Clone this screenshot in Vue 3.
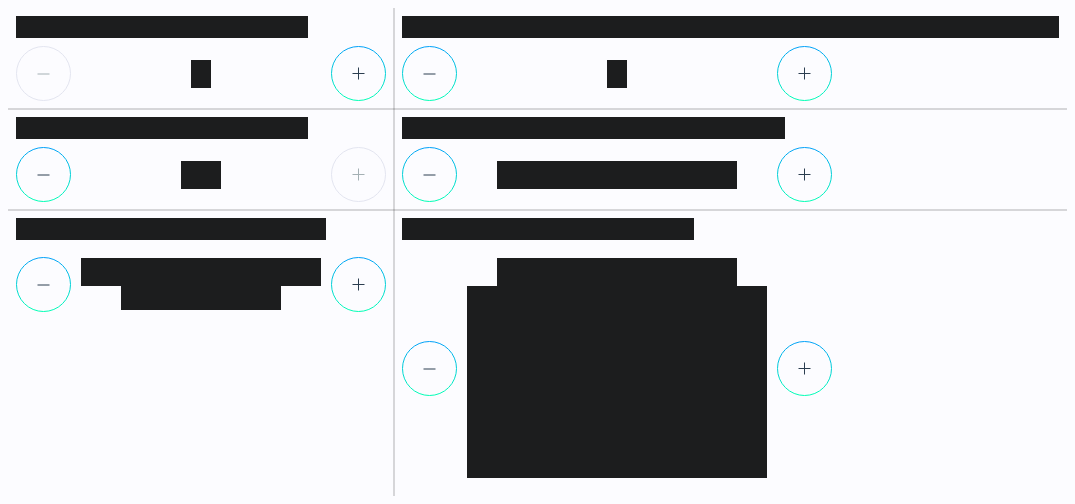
<script setup>
import { reactive } from 'vue'

const steppers = reactive([
  { id: 'a', title: 'medium', value: 'digit', extra: '', atMin: true },
  { id: 'b', title: 'full', value: 'digit', extra: '', wide: true },
  { id: 'c', title: 'medium', value: 'number', extra: '', atMax: true },
  { id: 'd', title: 'long', value: 'text', extra: '', wide: true },
  { id: 'e', title: 'regular', value: 'text', extra: 'short' },
  { id: 'f', title: 'medium', value: 'text', extra: 'paragraph', wide: true }
])
</script>

<template>
  <main class="board">
    <section v-for="s in steppers" :key="s.id" class="cell">
      <div class="title" :class="s.title"></div>
      <div class="stepper" :class="{ wide: s.wide }" role="group">
        <button type="button" class="step" aria-label="Decrease" :disabled="s.atMin">
          <svg viewBox="0 0 55 55" aria-hidden="true">
            <defs>
              <linearGradient :id="'ring-minus-' + s.id" x1="0" y1="0" x2="0" y2="1">
                <stop offset="0" stop-color="#00a0f8" />
                <stop offset="1" stop-color="#00ffb4" />
              </linearGradient>
            </defs>
            <circle cx="27.5" cy="27.5" r="27" :stroke="s.atMin ? '#e3e5f0' : `url(#ring-minus-${s.id})`" />
            <path class="sign" d="M21.5 28h12" />
          </svg>
        </button>
        <div class="value">
          <div class="amount" :class="s.value"></div>
          <div v-if="s.extra" class="extra" :class="s.extra"></div>
        </div>
        <button type="button" class="step" aria-label="Increase" :disabled="s.atMax">
          <svg viewBox="0 0 55 55" aria-hidden="true">
            <defs>
              <linearGradient :id="'ring-plus-' + s.id" x1="0" y1="0" x2="0" y2="1">
                <stop offset="0" stop-color="#00a0f8" />
                <stop offset="1" stop-color="#00ffb4" />
              </linearGradient>
            </defs>
            <circle cx="27.5" cy="27.5" r="27" :stroke="s.atMax ? '#e3e5f0' : `url(#ring-plus-${s.id})`" />
            <path class="sign" d="M21.5 27.5h12M27.5 21.5v12" />
          </svg>
        </button>
      </div>
    </section>
  </main>
</template>

<style>
body {
  background: #fcfcff;
}
</style>

<style scoped>
.board {
  display: grid;
  grid-template-columns: max-content minmax(0, 1fr);
  margin: 8px;
  font-family: "Open Sans", sans-serif;
}

.cell {
  position: relative;
  display: flex;
  flex-direction: column;
  gap: 8px;
  padding: 8px;
}

/* Divider under every row but the last */
.cell:nth-child(-n + 4)::after {
  content: "";
  position: absolute;
  left: 0;
  right: 0;
  bottom: -1px;
  height: 2px;
  background: rgba(0, 0, 0, 0.15);
}

/* Divider between the two columns */
.cell:nth-child(even)::before {
  content: "";
  position: absolute;
  top: 0;
  bottom: 0;
  left: -1px;
  width: 2px;
  background: rgba(0, 0, 0, 0.15);
}

.title,
.amount,
.extra {
  max-width: 100%;
  background: #1c1d1e;
}

.title {
  height: 22px;
}

.title.medium {
  width: 292px;
}

.title.regular {
  width: 310px;
}

.title.long {
  width: 383px;
}

.title.full {
  width: 100%;
}

.stepper {
  display: flex;
  align-items: center;
  width: 370px;
}

.stepper.wide {
  width: 430px;
  max-width: 100%;
}

.step {
  flex: none;
  width: 55px;
  height: 55px;
  padding: 0;
  border: 0;
  border-radius: 50%;
  background: none;
  cursor: pointer;
}

.step:disabled {
  cursor: default;
}

.step svg {
  display: block;
  width: 55px;
  height: 55px;
  fill: none;
  stroke-width: 1;
}

.sign {
  stroke: #2c3e50;
}

.step:disabled .sign {
  stroke: #a4b0b4;
}

.value {
  flex: 1;
  min-width: 0;
  margin: 10px;
  display: flex;
  flex-direction: column;
  align-items: center;
}

.amount {
  height: 28px;
}

.amount.digit {
  width: 20px;
}

.amount.number {
  width: 40px;
}

.amount.text {
  width: 240px;
}

.extra.short {
  width: 160px;
  height: 24px;
}

.extra.paragraph {
  width: 100%;
  height: 192px;
}
</style>
